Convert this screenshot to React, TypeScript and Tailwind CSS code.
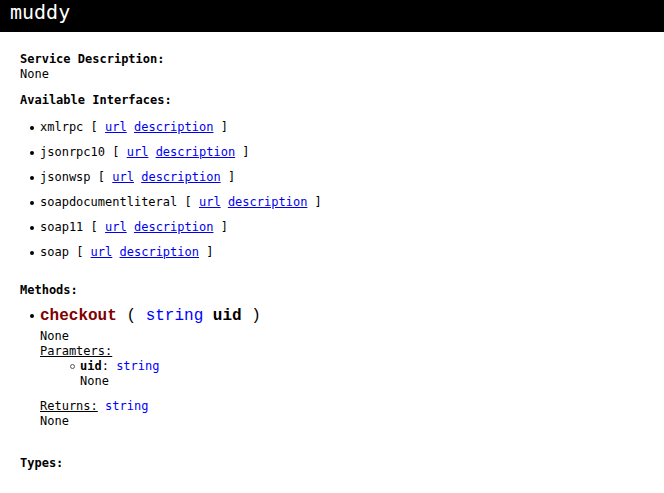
const mono = { fontFamily: '"DejaVu Sans Mono", monospace' }

const interfaces = ['xmlrpc', 'jsonrpc10', 'jsonwsp', 'soapdocumentliteral', 'soap11', 'soap']

function Dot() {
  return (
    <span className="flex w-5 shrink-0 items-center justify-start pl-[10px]">
      <span className="h-[4px] w-[4px] rounded-full bg-black" />
    </span>
  )
}

export default function App() {
  return (
    <div className="min-h-[493px] bg-white text-black" style={mono}>
      {/* header */}
      <div className="h-8 bg-black pl-[10px] text-[20px] leading-[24px] text-white">muddy</div>

      <div className="pl-5 pt-5 text-[12px] leading-[15px]">
        <div className="font-bold">Service Description:</div>
        <div>None</div>

        <div className="mt-[11px] font-bold">Available Interfaces:</div>
        <div className="mt-3 flex flex-col gap-[10px]">
          {interfaces.map(name => (
            <div key={name} className="flex items-center">
              <Dot />
              <span className="whitespace-pre">
                {name} [ <a className="text-[#0000ee] underline">url</a>{' '}
                <a className="text-[#0000ee] underline">description</a> ]
              </span>
            </div>
          ))}
        </div>

        <div className="mt-[23px] font-bold">Methods:</div>
        <div className="mt-2 flex items-center">
          <Dot />
          <span
            className="whitespace-pre text-[16px] leading-[20px]"
            style={{ fontFamily: '"Courier New", Courier, "Nimbus Mono PS", "Nimbus Mono L", FreeMono, "Liberation Mono", monospace' }}
          >
            <span className="font-bold text-[#800000]">checkout</span> ({' '}
            <span className="text-[#0000ff]">string</span> <span className="font-bold">uid</span> )
          </span>
        </div>

        <div className="pl-5">
          <div className="mt-[3px]">None</div>
          <div className="underline">Paramters:</div>
          <div className="flex">
            <span className="flex h-[15px] w-10 shrink-0 items-center justify-end pr-[5px]">
              <span className="h-[5px] w-[5px] rounded-full border border-[#555]" />
            </span>
            <div>
              <div>
                <span className="font-bold">uid</span>: <span className="text-[#0000ff]">string</span>
              </div>
              <div>None</div>
            </div>
          </div>
          <div className="mt-[10px]">
            <span className="underline">Returns:</span> <span className="text-[#0000ff]">string</span>
          </div>
          <div>None</div>
        </div>

        <div className="mt-[27px] font-bold">Types:</div>
      </div>
    </div>
  )
}
